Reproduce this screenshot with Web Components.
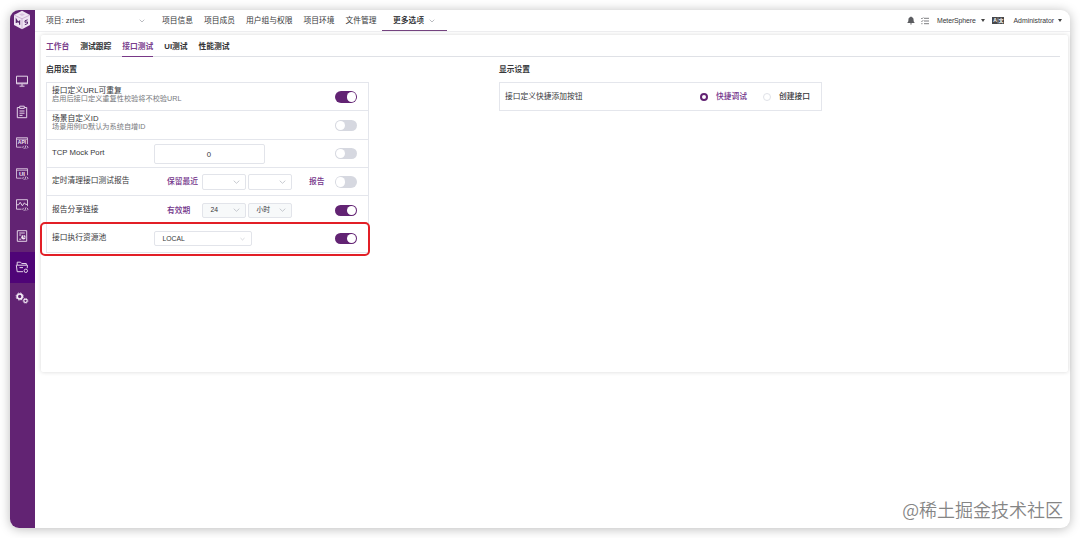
<!DOCTYPE html>
<html lang="zh-CN">
<head>
<meta charset="utf-8">
<title>MeterSphere</title>
<style>
	html, body {
		margin: 0;
		height: 100%;
		overflow: hidden;
		background: #fff;
	}
	body {
		font: 7.75px/10px "Liberation Sans", "Noto Sans CJK SC", sans-serif;
		color: #36373a;
	}
</style>
</head>
<body>
<ms-app>
	<ms-sidebar slot="side"></ms-sidebar>
	<ms-header slot="header"></ms-header>
	<ms-card slot="main">
		<ms-tabs slot="tabs">
			<ms-tab tone="primary">工作台</ms-tab>
			<ms-tab>测试跟踪</ms-tab>
			<ms-tab tone="primary" active>接口测试</ms-tab>
			<ms-tab>UI测试</ms-tab>
			<ms-tab>性能测试</ms-tab>
		</ms-tabs>
		<ms-section heading="启用设置">
			<ms-row label="接口定义URL可重复" desc="启用后接口定义重复性校验将不校验URL">
				<ms-switch slot="end" on></ms-switch>
			</ms-row>
			<ms-row label="场景自定义ID" desc="场景用例ID默认为系统自增ID">
				<ms-switch slot="end"></ms-switch>
			</ms-row>
			<ms-row label="TCP Mock Port">
				<ms-number>0</ms-number>
				<ms-switch slot="end"></ms-switch>
			</ms-row>
			<ms-row label="定时清理接口测试报告">
				<ms-note lead>保留最近</ms-note>
				<ms-select></ms-select>
				<ms-select></ms-select>
				<ms-note slot="end">报告</ms-note>
				<ms-switch slot="end"></ms-switch>
			</ms-row>
			<ms-row label="报告分享链接">
				<ms-note lead>有效期</ms-note>
				<ms-select disabled>24</ms-select>
				<ms-select disabled>小时</ms-select>
				<ms-switch slot="end" on></ms-switch>
			</ms-row>
			<ms-row label="接口执行资源池" marked>
				<ms-select wide>LOCAL</ms-select>
				<ms-switch slot="end" on></ms-switch>
			</ms-row>
		</ms-section>
		<ms-section heading="显示设置">
			<ms-row label="接口定义快捷添加按钮">
				<ms-radio slot="end" checked>快捷调试</ms-radio>
				<ms-radio slot="end">创建接口</ms-radio>
			</ms-row>
		</ms-section>
	</ms-card>
	<span slot="mark">@稀土掘金技术社区</span>
</ms-app>

<script>
const define = (name, html) => {
	const template = document.createElement('template');
	template.innerHTML = html;
	customElements.define(name, class extends HTMLElement {
		constructor() {
			super();
			this.attachShadow({mode: 'open'}).appendChild(template.content.cloneNode(true));
		}

		connectedCallback() {
			// [data-attr] nodes show the value of the host attribute of that name
			this.shadowRoot.querySelectorAll('[data-attr]').forEach(node => {
				node.textContent = this.getAttribute(node.dataset.attr) || '';
			});
		}
	});
};

define('ms-app', `
	<style>
		:host {
			display: block;
			box-sizing: border-box;
			height: 538px;
			padding: 10px;
		}
		.window {
			position: relative;
			display: flex;
			height: 518px;
			border-radius: 9px;
			background: #fff;
			box-shadow: 0 1px 11px rgba(0, 0, 0, .27);
		}
		.content {
			flex: 1;
			min-width: 0;
		}
		::slotted([slot=mark]) {
			position: absolute;
			right: 7px;
			bottom: 7px;
			font: 350 18px/24px "Noto Sans CJK SC", sans-serif;
			color: #858585;
			text-shadow: 0 0 1px #fff;
		}
	</style>
	<div class="window">
		<slot name="side"></slot>
		<div class="content">
			<slot name="header"></slot>
			<slot name="main"></slot>
		</div>
		<slot name="mark"></slot>
	</div>`);

define('ms-sidebar', `
	<style>
		:host {
			display: block;
			width: 24.5px;
			background: #622373;
			border-radius: 9px 0 0 9px;
		}
		.logo {
			height: 55.5px;
			display: flex;
			justify-content: center;
		}
		.logo svg {
			width: 18px;
			height: 20px;
		}
		.item {
			height: 31px;
			display: flex;
			align-items: center;
			justify-content: center;
		}
		.item.active {
			background: #4f0477;
		}
		.item svg {
			width: 14px;
			height: 14px;
			fill: none;
			stroke: #e3d3e7;
			stroke-width: 1;
		}
		.item text {
			font: bold 5px "Liberation Sans", sans-serif;
			fill: #f0e6f2;
			stroke: none;
			text-anchor: middle;
		}
	</style>
	<div class="logo">
		<svg viewBox="0 0 18 20">
			<path d="M9 .8 17 5v10l-8 4.3L1 15V5z" fill="#efe5f3"/>
			<path d="M1 5l8 3.800L17 5" fill="none" stroke="#b592c0" stroke-width=".6"/>
			<path d="M9 8.800V19" fill="none" stroke="#b592c0" stroke-width=".6"/>
			<path d="M6 4.600 9 3.200l3 1.400-3 1.500z" fill="#d8c3de"/>
			<path d="M3.300 13V9.500l1.700 2.700 1.600-1v3.500" fill="none" stroke="#54246b" stroke-width="1.200"/>
			<path d="M14.600 9.800l-2.600 1v1.500l2.500-.4v1.700l-2.700 1.100" fill="none" stroke="#54246b" stroke-width="1"/>
		</svg>
	</div>
	<div class="item"><svg viewBox="0 0 14 14"><path d="M1.500 2.200h11v7.600h-11z"/><path d="M1.500 9h11M4.500 12.200h5"/><path d="M7 10v2"/></svg></div>
	<div class="item"><svg viewBox="0 0 14 14"><path d="M4.500 2.500H2.300v10.200h9.400V2.500H9.500M4.700 1.200h4.600v2.200H4.700zM4.500 6h5M4.500 8.200h5M4.500 10.400h3"/></svg></div>
	<div class="item"><svg viewBox="0 0 14 14"><path d="M6.500 11.200h-5V1.700h11v6.500M1.500 3.200h11" stroke-width=".8"/><text x="7" y="8.200">API</text><path d="M8.800 9.800l-1.300 1.400 1.300 1.300M11.800 9.800l1.300 1.400-1.300 1.300M10.800 9.500l-1 3.400" stroke-width=".8"/></svg></div>
	<div class="item"><svg viewBox="0 0 14 14"><path d="M6.500 11.200h-5V1.700h11v6.500M1.500 3.200h11" stroke-width=".8"/><text x="7" y="8.700" style="font-size:6px">UI</text><path d="M8.800 9.800l-1.300 1.400 1.300 1.300M11.800 9.800l1.300 1.400-1.300 1.300M10.800 9.500l-1 3.400" stroke-width=".8"/></svg></div>
	<div class="item"><svg viewBox="0 0 14 14"><path d="M6.500 11.200h-5V1.700h11v6.500" stroke-width=".9"/><path d="M1.500 6.800h2l1.700-2.500 2.200 3.500 2-3 1.200 1.600h1.900"/><path d="M8.800 9.800l-1.300 1.400 1.300 1.300M11.800 9.800l1.300 1.400-1.300 1.300M10.800 9.500l-1 3.400" stroke-width=".8"/></svg></div>
	<div class="item"><svg viewBox="0 0 14 14"><path d="M2.300 1.700h9.400v10.600H2.300zM4.200 4h5.600M4.200 6h2M4.200 10.200h2"/><circle cx="8.500" cy="8.300" r="2.200" fill="#f0e6f2" stroke="none"/><path d="M8.500 8.300V6M8.500 8.300h2.500" stroke="#622373" stroke-width=".6"/></svg></div>
	<div class="item active"><svg viewBox="0 0 14 14"><path d="M8 11.700H2.200L1.300 5.200h11.200l-.3 3M2.200 5V2.200h3.300l1.200 1.300h4.600V5M4.500 7.600h3.500"/><circle cx="10.800" cy="10.800" r="1.700"/></svg></div>
	<div class="item"><svg viewBox="0 0 14 14"><circle cx="4.700" cy="5.500" r="2.500" stroke="#f6eff8" stroke-width="1.700"/><circle cx="4.700" cy="5.500" r="3.600" stroke="#f6eff8" stroke-width=".8" stroke-dasharray="1.600 1.230"/><circle cx="10.500" cy="9.800" r="1.700" stroke="#f6eff8" stroke-width="1.100"/><circle cx="10.500" cy="9.800" r="2.500" stroke="#f6eff8" stroke-width=".6" stroke-dasharray="1.100 .860"/></svg></div>`);

define('ms-header', `
	<style>
		:host {
			display: flex;
			align-items: center;
			box-sizing: border-box;
			height: 22px;
			padding: 0 8px 0 11.5px;
			border-bottom: 1px solid #efeff1;
			white-space: nowrap;
		}
		.project {
			display: flex;
			align-items: center;
			justify-content: space-between;
			width: 99px;
			margin-right: 17px;
		}
		.project svg, .more svg {
			width: 6px;
			height: 4px;
			fill: none;
			stroke: #a9acb3;
			stroke-width: .8;
		}
		nav {
			display: flex;
			gap: 11px;
			align-items: center;
		}
		.more {
			display: flex;
			align-items: center;
			gap: 5px;
			box-sizing: border-box;
			height: 21px;
			width: 65px;
			margin-left: -5.5px;
			padding: 1px 0 0 11px;
			border-bottom: 1.500px solid #74437f;
			color: #202124;
			font-weight: 500;
		}
		.tools {
			display: flex;
			align-items: center;
			margin-left: auto;
			font-size: 6.900px;
		}
		.bell { width: 8px; height: 9px; margin-right: 6px; }
		.list { width: 8px; height: 8px; margin-right: 8px; }
		.caret {
			border: 2.300px solid transparent;
			border-top: 3px solid #444;
			border-bottom: 0;
		}
		.lang { width: 12px; height: 7px; margin: 0 10px 0 6.500px; }
		.lang text { font: bold 5px "Liberation Sans", "Noto Sans CJK SC", sans-serif; text-anchor: middle; }
		.workspace { width: 44px; letter-spacing: -.1px; }
		.user { width: 44.500px; }
	</style>
	<div class="project"><span>项目: zrtest</span><svg viewBox="0 0 6 4"><path d="M.7.700 3 3 5.300.7"/></svg></div>
	<nav>
		<span>项目信息</span>
		<span>项目成员</span>
		<span>用户组与权限</span>
		<span>项目环境</span>
		<span>文件管理</span>
		<span class="more">更多选项<svg viewBox="0 0 6 4"><path d="M.7.700 3 3 5.300.7"/></svg></span>
	</nav>
	<div class="tools">
		<svg class="bell" viewBox="0 0 8 9"><path d="M4 .5c.5 0 .6.300.6.600C6 1.500 6.600 2.500 6.600 4c0 1.500.4 2.200 1.200 2.900H.2C1 6.200 1.400 5.500 1.400 4c0-1.500.6-2.500 2-2.900 0-.3.1-.6.600-.6zM3 7.400h2a1 1 0 0 1-2 0z" fill="#5b5c60"/></svg>
		<svg class="list" viewBox="0 0 8 8"><path d="M3 1.300h5M3 4h5M3 6.700h5M.2 1.200l.7.700L2.200.5M.2 3.900l.7.700 1.300-1.400M.3 6.700h1.200" fill="none" stroke="#5b5c60" stroke-width=".8"/></svg>
		<span class="workspace">MeterSphere</span><i class="caret"></i>
		<svg class="lang" viewBox="0 0 12 7"><path d="M0 0h12v7H0z" fill="#46474a"/><path d="M6 .5v6" stroke="#ddd" stroke-width=".5"/><text x="3" y="5.300" fill="#fff">A</text><text x="9" y="5.300" fill="#fff">文</text></svg>
		<span class="user">Administrator</span><i class="caret"></i>
	</div>`);

define('ms-card', `
	<style>
		:host {
			display: block;
			box-sizing: border-box;
			height: 337px;
			margin: 3px 2px 0 6px;
			padding: 2px 8px 0 5.500px;
			background: #fff;
			border-radius: 2px;
			box-shadow: 0 0 4px rgba(0, 0, 0, .16);
		}
		.columns {
			display: grid;
			grid-template-columns: 323px 323px;
			column-gap: 130px;
			padding-top: 8px;
		}
	</style>
	<slot name="tabs"></slot>
	<div class="columns"><slot></slot></div>`);

define('ms-tabs', `
	<style>
		:host {
			display: flex;
			gap: 11px;
			height: 19px;
			border-bottom: 1px solid #dfe1e6;
		}
	</style>
	<slot></slot>`);

define('ms-tab', `
	<style>
		:host {
			box-sizing: border-box;
			height: 20px;
			padding-top: 5px;
			font-weight: 700;
			color: #303133;
		}
		:host([tone=primary]) {
			color: #7a3f8d;
		}
		:host([active]) {
			border-bottom: 1.500px solid #783887;
		}
	</style>
	<slot></slot>`);

define('ms-section', `
	<style>
		h3 {
			margin: 0 0 7px;
			font-size: inherit;
			line-height: 10px;
		}
		.list {
			border: 1px solid #e4e6ec;
			border-bottom: 0;
		}
	</style>
	<h3 data-attr="heading"></h3>
	<div class="list"><slot></slot></div>`);

define('ms-row', `
	<style>
		:host {
			position: relative;
			display: grid;
			grid-template-columns: 101.500px 1fr auto;
			box-sizing: border-box;
			height: 28.300px;
			padding: 0 11px 0 5px;
			border-bottom: 1px solid #e4e6ec;
		}
		.text {
			padding-top: 8.500px;
			white-space: nowrap;
		}
		:host([desc]) .text {
			padding-top: 3px;
		}
		.desc {
			margin-top: -2px;
			font-size: 7.200px;
			color: #77797d;
		}
		.controls, .end {
			display: flex;
			align-items: center;
			gap: 2px;
			padding-top: 1px;
		}
		.end {
			gap: 10px;
		}
		.frame {
			display: none;
		}
		/* the frame lies over the row and the borders of the list */
		:host([marked]) .frame {
			display: block;
			position: absolute;
			inset: -2px -2px -4px -7.500px;
			border: 2px solid #e21f26;
			border-radius: 5px;
		}
	</style>
	<div class="text">
		<div data-attr="label"></div>
		<div class="desc" data-attr="desc"></div>
	</div>
	<div class="controls"><slot></slot></div>
	<div class="end"><slot name="end"></slot></div>
	<div class="frame"></div>`);

define('ms-switch', `
	<style>
		:host {
			display: flex;
			box-sizing: border-box;
			width: 22.500px;
			height: 11.500px;
			padding: 1px;
			border-radius: 6px;
			background: #d6d8e0;
		}
		:host([on]) {
			justify-content: flex-end;
			background: #622373;
		}
		i {
			width: 9.500px;
			height: 9.500px;
			border-radius: 50%;
			background: #fff;
		}
	</style>
	<i></i>`);

define('ms-number', `
	<style>
		:host {
			box-sizing: border-box;
			width: 111px;
			height: 20px;
			border: 1px solid #e2e4ea;
			border-radius: 2px;
			line-height: 19px;
			text-align: center;
		}
	</style>
	<slot></slot>`);

define('ms-select', `
	<style>
		:host {
			display: flex;
			align-items: center;
			justify-content: space-between;
			box-sizing: border-box;
			width: 44px;
			height: 15.500px;
			padding: 0 5px 0 8px;
			border: 1px solid #e2e4ea;
			border-radius: 2px;
			font-size: 6.800px;
		}
		:host([disabled]) {
			background: #f7f9fa;
		}
		:host([wide]) {
			width: 98.500px;
			padding-right: 6px;
		}
		svg {
			flex: none;
			width: 7px;
			height: 4px;
			margin-left: auto;
			fill: none;
			stroke: #b9bcc4;
			stroke-width: .8;
		}
		:host([wide]) svg {
			width: 5px;
		}
	</style>
	<slot></slot>
	<svg viewBox="0 0 7 4"><path d="M.7.700 3.500 3.300 6.300.7"/></svg>`);

define('ms-note', `
	<style>
		:host {
			padding-top: .5px;
			color: #72338a;
			font-weight: 500;
			white-space: nowrap;
		}
		:host([lead]) {
			box-sizing: border-box;
			width: 46px;
			padding-left: 13.500px;
		}
	</style>
	<slot></slot>`);

define('ms-radio', `
	<style>
		:host {
			display: flex;
			align-items: center;
			gap: 8px;
			margin-left: 6px;
			color: #36373a;
			font-weight: 500;
			white-space: nowrap;
		}
		:host([checked]) {
			color: #72338a;
		}
		i {
			box-sizing: border-box;
			width: 8px;
			height: 8px;
			border: 1px solid #e0e2e8;
			border-radius: 50%;
		}
		:host([checked]) i {
			border: 2.500px solid #622373;
		}
	</style>
	<i></i><slot></slot>`);
</script>
</body>
</html>
